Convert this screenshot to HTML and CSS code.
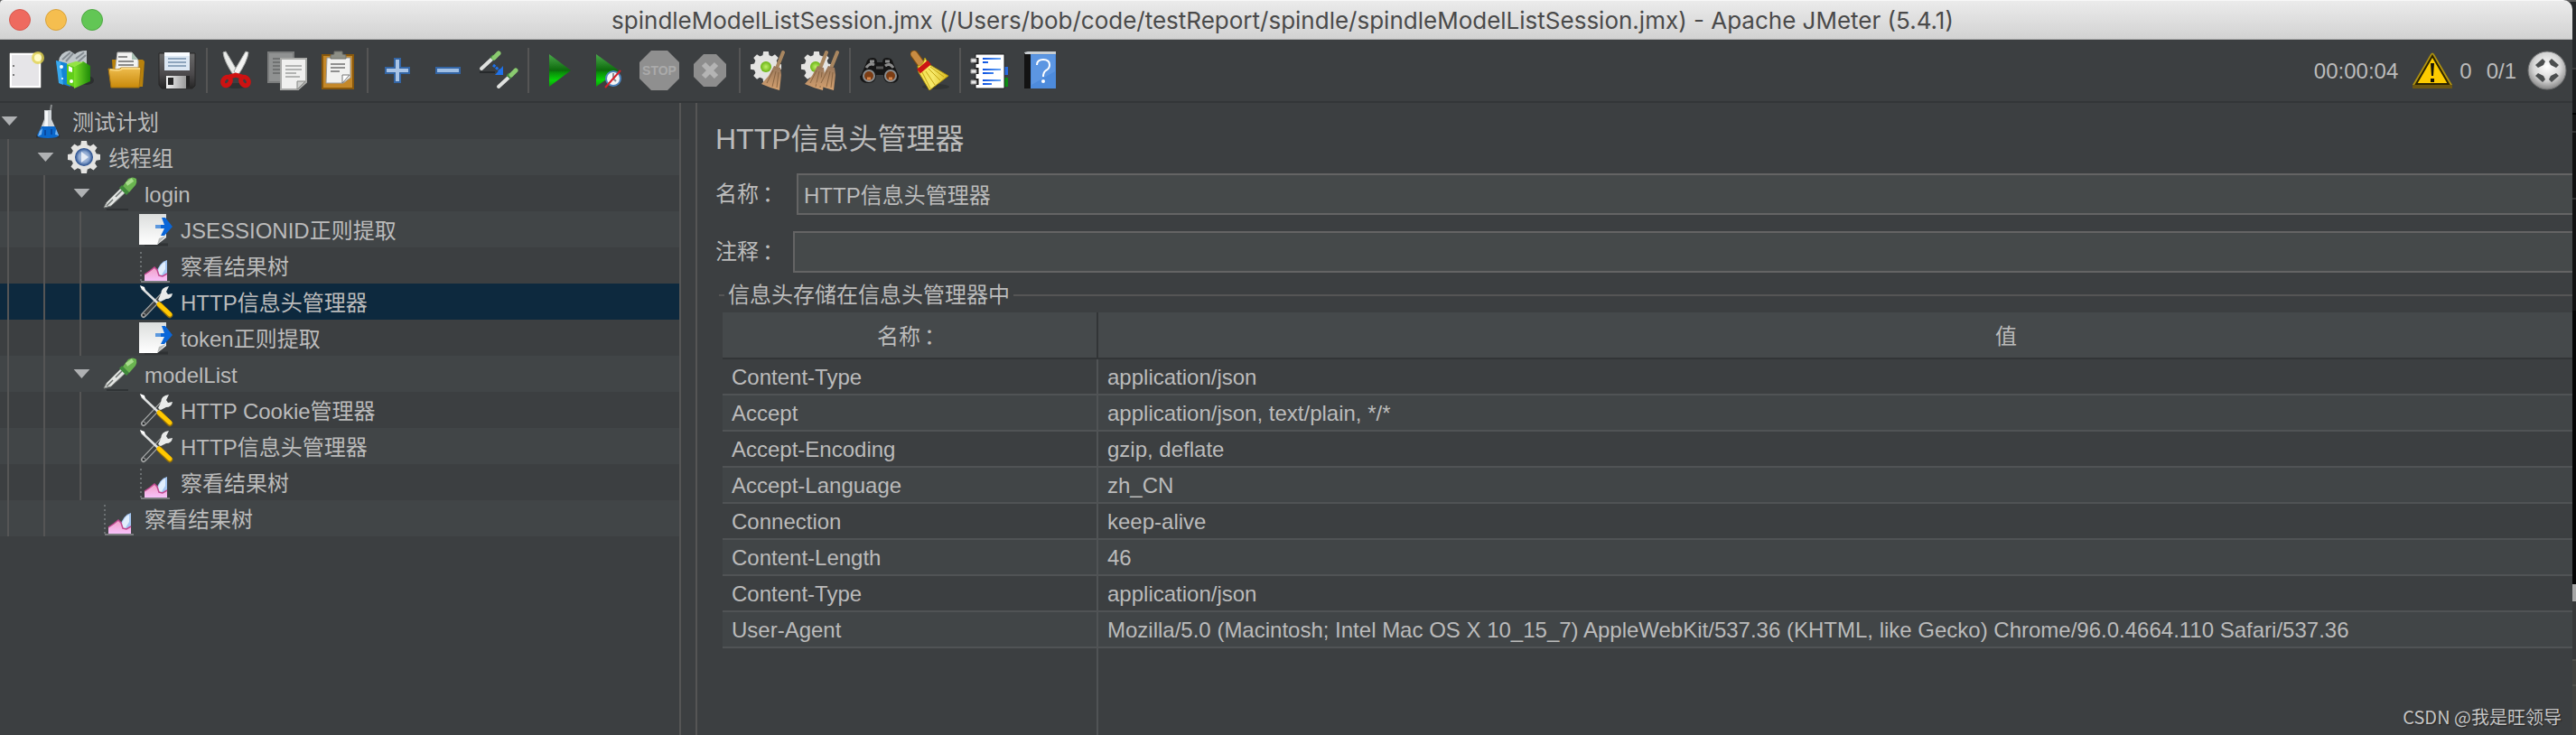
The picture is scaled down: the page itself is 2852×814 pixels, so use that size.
FILE: index.html
```html
<!DOCTYPE html>
<html lang="zh-CN">
<head>
<meta charset="utf-8">
<title>spindleModelListSession.jmx - Apache JMeter (5.4.1)</title>
<link rel="stylesheet" href="styles.css">
</head>
<body>
<svg class="defs" width="0" height="0" aria-hidden="true">
  <defs>
    <linearGradient id="paper" x1="0" y1="0" x2="0" y2="1"><stop offset="0" stop-color="#dcdedd"/><stop offset="1" stop-color="#fff"/></linearGradient>
    <linearGradient id="play" x1="0" y1="0" x2="0" y2="1"><stop offset="0" stop-color="#4aa84a"/><stop offset=".5" stop-color="#0c6a0c"/><stop offset=".55" stop-color="#0a8a0a"/><stop offset=".8" stop-color="#08d208"/><stop offset="1" stop-color="#0a9a0a"/></linearGradient>
    <linearGradient id="gold" x1="0" y1="0" x2="0" y2="1"><stop offset="0" stop-color="#eebc4e"/><stop offset="1" stop-color="#c98a0a"/></linearGradient>
    <linearGradient id="green" x1="0" y1="0" x2="1" y2="0"><stop offset="0" stop-color="#7be02a"/><stop offset="1" stop-color="#1e8a08"/></linearGradient>
    <linearGradient id="floppy" x1="0" y1="0" x2="0" y2="1"><stop offset="0" stop-color="#6a6a6a"/><stop offset=".6" stop-color="#4b494b"/><stop offset="1" stop-color="#252525"/></linearGradient>
    <linearGradient id="metal" x1="0" y1="0" x2="1" y2="0"><stop offset="0" stop-color="#f4f4f4"/><stop offset="1" stop-color="#9a9a9a"/></linearGradient>
    <linearGradient id="straw" x1="0" y1="0" x2="0" y2="1"><stop offset="0" stop-color="#97765a"/><stop offset="1" stop-color="#d6a270"/></linearGradient>
    <linearGradient id="yellow" x1="0" y1="0" x2="1" y2="0"><stop offset="0" stop-color="#f5e04a"/><stop offset=".5" stop-color="#f7e96a"/><stop offset="1" stop-color="#d9b91c"/></linearGradient>
    <linearGradient id="blue" x1="0" y1="0" x2="1" y2="0"><stop offset="0" stop-color="#0a4fe0"/><stop offset="1" stop-color="#6aa8f4"/></linearGradient>
    <radialGradient id="ball" cx=".5" cy=".4" r=".6"><stop offset="0" stop-color="#fff"/><stop offset=".6" stop-color="#d6d6d6"/><stop offset="1" stop-color="#858585"/></radialGradient>
    <radialGradient id="lime"><stop offset="0" stop-color="#c0f06a"/><stop offset="1" stop-color="#6ab414"/></radialGradient>
    <radialGradient id="orb" cx=".5" cy=".5" r=".5"><stop offset="0" stop-color="#c2d0e6"/><stop offset=".6" stop-color="#8ba6cf"/><stop offset="1" stop-color="#1e4688"/></radialGradient>
    <linearGradient id="pink" x1="0" y1="0" x2="0" y2="1"><stop offset="0" stop-color="#f0a0c4"/><stop offset="1" stop-color="#f8c0fa"/></linearGradient>

    <symbol id="i-gear" viewBox="0 0 38 38">
      <g fill="#e4e4e2"><circle cx="19" cy="19" r="14"/><path d="M16 1h6l1 6h-8zM16 37h6l1-6h-8z"/><path d="M1 16v6l6 1v-8zM37 16v6l-6 1v-8z"/><path d="M4.500 8.500l4-4 6 4-6 6zM33.500 8.500l-4-4-6 4 6 6zM4.500 29.500l4 4 6-4-6-6zM33.500 29.500l-4 4-6-4 6-6z"/></g>
    </symbol>
    <symbol id="i-group" viewBox="0 0 38 38"><use href="#i-gear"/><circle cx="19" cy="19" r="10" fill="url(#orb)"/><path d="M16 13l8 6-8 6z" fill="#e6ecf6"/></symbol>
    <symbol id="i-flask" viewBox="0 0 38 38">
      <path d="M6 36h26" stroke="#24282c" stroke-width="3" opacity=".6"/>
      <path d="M15 7h8v10l8 18q-1 2-12 2T8 35l7-18z" fill="#cfd4d8"/><path d="M16 8h3v26h-6l3-15z" fill="#f5f7f8"/>
      <path d="M12 25h15l4 10q-1 3-12 3T7 35z" fill="#0a68cc"/><path d="M10 30l-2 6 4-2 1-7zM28 28l3 7-4-1z" fill="#78b4f0"/><path d="M16 29v6M23 28v6" stroke="#0848a0" stroke-width="2"/><path d="M22 7l1-6" stroke="#8a8d8f" stroke-width="2"/>
    </symbol>
    <symbol id="i-pipette" viewBox="0 0 38 38">
      <path d="M4 37h24" stroke="#26292b" stroke-width="2" opacity=".6"/>
      <path d="M1 35L4 29 20 13l5 5L9 33z" fill="#e2e4e2" stroke="#7b7f7c"/><path d="M4 33L11 26M14 23l7-7" stroke="#6e7472" stroke-width="1.500"/>
      <path d="M21 10l8 8-3 3-8-8z" fill="#3f8a3a"/><path d="M22 11l6-8q5-3 9 0 1 4-1 7l-7 8z" fill="#6ab450"/><path d="M26 9l7-5" stroke="#a8dc8c" stroke-width="4"/>
    </symbol>
    <symbol id="i-extract" viewBox="0 0 38 38">
      <path d="M6 36h26" stroke="#25282a" stroke-width="3" opacity=".6"/>
      <path d="M0 2h30v26L20 36H0z" fill="url(#paper)"/><path d="M20 36l2-7 8-3z" fill="#b8bab9"/>
      <path d="M18 14h12v4H18z" fill="#5c98de"/><path d="M25 6h4l8 10-9 10h-4l4-8h-4v-4h4z" fill="#0a66d8"/>
    </symbol>
    <symbol id="i-tree" viewBox="0 0 38 38">
      <path d="M2 4v33" stroke="#6b7072" stroke-width="2" stroke-dasharray="2 3"/><path d="M2 37h32" stroke="#7a7c7e" stroke-width="2"/>
      <path d="M18 30q4-15 13-17v22H18z" fill="#a4c6f2"/><path d="M20 28q3-11 9-13v8l-5 8z" fill="#e1eefc"/>
      <path d="M6 36v-7l6-4 5-4 3 3 2 6 4 1 5-3v8z" fill="url(#pink)"/><path d="M6 29l6-4 5-4 3 3 2 6 4 1 5-3" fill="none" stroke="#c04890" stroke-width="1.500"/>
    </symbol>
    <symbol id="i-tools" viewBox="0 0 38 38">
      <path d="M5 34L25 13" stroke="#a6a8a8" stroke-width="6" stroke-linecap="round"/><path d="M6 33L24 14" stroke="#3c4042" stroke-width="3.500" stroke-linecap="round"/>
      <path d="M3 4l18 17" stroke="#dfe1e1" stroke-width="2.500"/><path d="M1 1l5 2 1 4-5-3z" fill="#fff"/>
      <path d="M21 17l3-6q0-8 9-9l-3 6 2 3 5-1q-1 6-7 6l-6 3z" fill="#e9ebea"/><circle cx="5" cy="34" r="2" fill="#25282a" stroke="#a8aaaa"/>
      <path d="M23 23l11 11" stroke="#94700a" stroke-width="6.500" stroke-linecap="round"/><path d="M22 22l12 11" stroke="#ffc800" stroke-width="5" stroke-linecap="round"/>
    </symbol>
    <symbol id="i-broom" viewBox="0 0 28 44">
      <path d="M25 2l-6 15" stroke="#a88660" stroke-width="4" stroke-linecap="round"/><path d="M15 17l7 2 1 8-2 17-10-3-10-4 8-9z" fill="url(#straw)"/>
      <path d="M14 22L7 36M17 23l-4 17M20 24l-2 17" stroke="#7c5a3a" stroke-width=".8"/>
    </symbol>
  </defs>
</svg>

<main class="window">
  <header class="titlebar">
    <div class="lights">
      <button class="light close" type="button" aria-label="关闭"></button>
      <button class="light minimize" type="button" aria-label="最小化"></button>
      <button class="light zoom" type="button" aria-label="缩放"></button>
    </div>
    <h1 class="window-title">spindleModelListSession.jmx (/Users/bob/code/testReport/spindle/spindleModelListSession.jmx) - Apache JMeter (5.4.1)</h1>
  </header>

  <div class="toolbar" role="toolbar">
    <button class="tool" type="button" aria-label="新建"><svg viewBox="0 0 44 44"><path d="M5 3h34v38H5z" fill="#e6e5e8" stroke="#a9a9a7" stroke-width="1"/><path d="M6 4h32v36H6z" fill="none" stroke="#fff" stroke-width="2"/><path d="M8 17h2M8 27h2" stroke="#777" stroke-width="2"/><circle cx="36" cy="8" r="7" fill="#e3d54e" opacity=".8"/><circle cx="36" cy="8" r="4" fill="#fffcc8"/></svg></button>
    <button class="tool" type="button" aria-label="模板"><svg viewBox="0 0 44 44"><path d="M3 12q1-10 12-12l6 4q4-4 13-4v26H6z" fill="#bfc6ca"/><path d="M7 10L16 2M11 12l8-9M22 9l9-7M24 13l9-8" stroke="#858c92" stroke-width="2"/><ellipse cx="34" cy="33" rx="8" ry="5" fill="#2b2e2f"/><path d="M0 11l12 3 4 26-12-4z" fill="#1484d6"/><path d="M0 11l5 2 3 25-5-2z" fill="#38a8ee"/><path d="M12 15l9 3v23l-9-4z" fill="#62ce1a"/><path d="M20 18l10-6 8 5v17L20 42z" fill="url(#green)"/><path d="M12 15l10-3 8 1-10 5z" fill="#94e444"/><circle cx="6" cy="18" r="2" fill="#fff"/><circle cx="7" cy="31" r="1" fill="#fff"/><path d="M14 17l4 2v5l-4-1z" fill="#fff"/><circle cx="17" cy="34" r="2" fill="#fff"/></svg></button>
    <button class="tool" type="button" aria-label="打开"><svg viewBox="0 0 44 44"><path d="M6 10h34l2 2-2 28H8z" fill="#b8810c"/><path d="M12 2h16l7 9v15H9z" fill="#f3f3f2" stroke="#b6b6b4"/><path d="M28 2v8h7z" fill="#a8c0b4"/><path d="M13 7h10M13 12h17M13 16h17" stroke="#8b8b8b" stroke-width="2"/><path d="M2 20q12 2 14-1h22l-2 22H5z" fill="url(#gold)" stroke="#a87410"/><path d="M4 21q12 2 13-1h20" stroke="#f8d67e" stroke-width="2" fill="none"/></svg></button>
    <button class="tool" type="button" aria-label="保存"><svg viewBox="0 0 44 44"><path d="M2 3h40v36l-3 3H5l-3-4z" fill="url(#floppy)" stroke="#262626"/><path d="M8 2h28v20H8z" fill="#dde8f4"/><path d="M8 2h28v4H8z" fill="#f8fbff"/><path d="M12 9h20M12 13h20M12 17h20" stroke="#8ea5bd" stroke-width="2"/><path d="M10 28h22v14H10z" fill="url(#metal)"/><path d="M12 30h6v8h-6z" fill="#262626"/><path d="M32 28h4v12h-4z" fill="#222"/></svg></button>
    <span class="separator"></span>
    <button class="tool" type="button" aria-label="剪切"><svg viewBox="0 0 44 44"><ellipse cx="22" cy="39" rx="14" ry="3" fill="#2e3132"/><path d="M7 2l3-1 13 22-4 5Q8 12 7 2z" fill="#e9ebe9" stroke="#a6a9a7"/><path d="M35 2l-3-1-13 22 4 5Q34 12 35 2z" fill="#f3f3f2" stroke="#a6a9a7"/><g fill="none" stroke="#ce1212" stroke-width="5"><ellipse cx="11" cy="34" rx="4" ry="5" transform="rotate(35 11 34)"/><ellipse cx="31" cy="34" rx="4" ry="5" transform="rotate(-35 31 34)"/><path d="M14 29l7-2 7 2"/></g></svg></button>
    <button class="tool" type="button" aria-label="复制"><svg viewBox="0 0 44 44"><path d="M1 2h28v33H1z" fill="#909292" stroke="#7b7d7d" stroke-width="2"/><path d="M6 9h16M6 13h10M6 17h10M6 21h8M6 25h8" stroke="#707272" stroke-width="2"/><path d="M15 9h28v26l-9 8H15z" fill="#f0f0ef" stroke="#a9aaa8" stroke-width="2"/><path d="M33 43v-9h9z" fill="#cfd0ce" stroke="#858683"/><path d="M20 17h18M20 21h18M20 25h12M20 29h16" stroke="#b3b4b3" stroke-width="2"/></svg></button>
    <button class="tool" type="button" aria-label="粘贴"><svg viewBox="0 0 44 44"><path d="M5 5h34v37H5z" fill="#c4882a" stroke="#89580c" stroke-width="2"/><path d="M10 8h26v22l-8 6H9z" fill="#f1f1f0" stroke="#999"/><path d="M27 36v-9h8z" fill="#fff" stroke="#777"/><path d="M14 15h16M14 19h16M14 23h10" stroke="#909090" stroke-width="2"/><path d="M14 9V5l4-1V1h9v3l4 1v4z" fill="#8d8f86" stroke="#6d6f68"/></svg></button>
    <span class="separator"></span>
    <button class="tool" type="button" aria-label="展开"><svg viewBox="0 0 44 44"><path d="M19 9h6v10h10v6H25v10h-6V25H9v-6h10z" fill="#a9c4e6" stroke="#3465a4" stroke-width="2"/></svg></button>
    <button class="tool" type="button" aria-label="收起"><svg viewBox="0 0 44 44"><path d="M9 19h26v6H9z" fill="#a0bfe4" stroke="#3465a4" stroke-width="2"/></svg></button>
    <button class="tool" type="button" aria-label="切换"><svg viewBox="0 0 44 44"><path d="M1 24h17" stroke="#26292b" stroke-width="2"/><path d="M3 20L16 8" stroke="#dfe1df" stroke-width="4" stroke-linecap="round"/><path d="M14 6l4 4" stroke="#3f8a3a" stroke-width="4"/><path d="M17 8l5-5" stroke="#8bcb70" stroke-width="5" stroke-linecap="round"/><path d="M22 40l12-11" stroke="#dfe1df" stroke-width="4" stroke-linecap="round"/><path d="M32 26l4 4" stroke="#3f8a3a" stroke-width="4"/><path d="M36 27l5-5" stroke="#8bcb70" stroke-width="5" stroke-linecap="round"/><path d="M16 16l8 7" stroke="#1f72ea" stroke-width="3" stroke-dasharray="3 1"/><path d="M27 17v10H18z" fill="#1f72ea"/></svg></button>
    <span class="separator"></span>
    <button class="tool" type="button" aria-label="启动"><svg viewBox="0 0 44 44"><path d="M12 4l24 18-24 18z" fill="url(#play)"/></svg></button>
    <button class="tool" type="button" aria-label="不停顿启动"><svg viewBox="0 0 44 44"><path d="M8 4l25 18L8 40z" fill="url(#play)"/><circle cx="27" cy="31" r="8" fill="#f4f6f8" stroke="#4d84bd" stroke-width="2"/><path d="M27 25v6l3 3" fill="none" stroke="#8a9098" stroke-width="2"/><path d="M18 41l17-19" stroke="#d6202a" stroke-width="2"/></svg></button>
    <button class="tool" type="button" aria-label="停止" disabled><svg viewBox="0 0 44 44"><path d="M13 0h18l13 13v18L31 44H13L0 31V13z" fill="#8f8f8f"/><text x="22" y="27" class="stop-text">STOP</text></svg></button>
    <button class="tool" type="button" aria-label="关闭线程" disabled><svg viewBox="0 0 44 44"><path d="M15 4h14l11 11v14L29 40H15L4 29V15z" fill="#8d8d8d"/><path d="M15 15l14 14M29 15L15 29" stroke="#b4b4b4" stroke-width="6"/></svg></button>
    <span class="separator"></span>
    <button class="tool" type="button" aria-label="清除"><svg viewBox="0 0 44 44"><use href="#i-gear" x="0" y="0" width="36" height="36"/><circle cx="18" cy="18" r="6" fill="url(#lime)"/><use href="#i-broom" x="12" y="0" width="28" height="44"/></svg></button>
    <button class="tool" type="button" aria-label="清除全部"><svg viewBox="0 0 44 44"><use href="#i-gear" x="0" y="0" width="36" height="36"/><circle cx="17" cy="18" r="6" fill="url(#lime)"/><use href="#i-broom" x="4" y="0" width="28" height="44"/><use href="#i-broom" x="16" y="0" width="28" height="44"/></svg></button>
    <span class="separator"></span>
    <button class="tool" type="button" aria-label="查找"><svg viewBox="0 0 44 44"><path d="M1 28L7 14q1-6 7-6 5 0 5 5h6q0-5 5-5 6 0 7 6l6 14q0 8-8 8-9 0-9-9h-8q0 9-9 9-9 0-9-8z" fill="#161616"/><path d="M7 19q4-6 9-3M28 17q5-4 9 2M11 12h5M28 12h5" stroke="#8d8d8d" stroke-width="3" fill="none"/><path d="M18 19h8" stroke="#555" stroke-width="3"/><circle cx="10" cy="28" r="7" fill="#8b8d8e"/><circle cx="10" cy="28" r="5" fill="#7c3d14"/><circle cx="34" cy="28" r="7" fill="#8b8d8e"/><circle cx="34" cy="28" r="5" fill="#7c3d14"/><path d="M8 31h4M32 31h4" stroke="#d8864a" stroke-width="3"/></svg></button>
    <button class="tool" type="button" aria-label="重置查找"><svg viewBox="0 0 44 44"><ellipse cx="28" cy="40" rx="15" ry="3" fill="#303334"/><path d="M4 4l8 11" stroke="#7b4d12" stroke-width="9" stroke-linecap="round"/><path d="M4 4l8 11" stroke="#c98c42" stroke-width="7" stroke-linecap="round"/><path d="M8 17q6 0 8-9l4 7 22 13-21 16L9 24z" fill="url(#yellow)" stroke="#b0940c"/><path d="M13 24l9 18M17 23l10 15M20 20l13 13M22 18l15 11" stroke="#c2a414" stroke-width="1"/><path d="M9 23l12-10" stroke="#cc1414" stroke-width="6"/></svg></button>
    <span class="separator"></span>
    <button class="tool" type="button" aria-label="函数助手"><svg viewBox="0 0 44 44"><path d="M37 18h5v9h-5z" fill="#2a6ce0"/><path d="M37 30h5v10h-5z" fill="#0c8c12"/><path d="M6 4h32v38H6z" fill="#fff" stroke="#1f2122"/><path d="M7 8v7M7 19v7M7 31v7" stroke="#1f1f1f" stroke-width="5"/><path d="M1 9h6v4H1zM1 21h6v4H1zM1 33h6v4H1z" fill="#e8e8e8" stroke="#999"/><path d="M14 8h20v2H14zM14 12h6v2h-6zM14 20h20v2H14zM14 24h12v2H14zM14 32h20v2H14zM14 36h10v2H14z" fill="url(#blue)"/></svg></button>
    <button class="tool" type="button" aria-label="帮助"><svg viewBox="0 0 44 44"><path d="M4 3h7v39H4z" fill="#131313"/><path d="M4 2l4-1h31v3H5z" fill="#c9ced2"/><path d="M11 4h28v38H11z" fill="#4d8bdc"/><path d="M12 5h26v18L12 38z" fill="#689fe6" opacity=".6"/><path d="M18 16q0-6 7-6t7 6q0 4-4 6-3 2-3 7" fill="none" stroke="#fff" stroke-width="2"/><circle cx="25" cy="34" r="2" fill="#fff"/></svg></button>

    <div class="status">
      <span>00:00:04</span>
      <button class="warning" type="button" aria-label="日志错误"><svg viewBox="0 0 44 44"><path d="M20 4q2-3 4 0l20 34v4H0v-4z" fill="#b0920f"/><path d="M0 38h44v4H0z" fill="#6b5612"/><path d="M22 6l18 31H4z" fill="#fccb00" stroke="#2c2400" stroke-width="2"/><path d="M20 14h4l-1 14h-2zM20 31h4v4h-4z" fill="#14130a"/></svg></button>
      <span class="errors">0</span>
      <span class="threads">0/1</span>
      <svg class="state" viewBox="0 0 44 44"><circle cx="22" cy="22" r="21" fill="url(#ball)" stroke="#6f7172"/><g fill="#4b4e4f"><path d="M9 16l8-7 3 3-2 4-6 3zM35 16l-8-7-3 3 2 4 6 3zM9 28l8 7 3-3-2-4-6-3zM35 28l-8 7-3-3 2-4 6-3z"/></g></svg>
    </div>
  </div>

  <div class="workspace">
    <ul class="tree" role="tree">
      <li class="node" role="treeitem"><button class="toggle" type="button" aria-label="折叠"></button><svg class="icon"><use href="#i-flask"/></svg><span>测试计划</span></li>
      <li class="node" role="treeitem"><i class="guide"></i><button class="toggle" type="button" aria-label="折叠"></button><svg class="icon"><use href="#i-group"/></svg><span>线程组</span></li>
      <li class="node" role="treeitem"><i class="guide"></i><i class="guide"></i><button class="toggle" type="button" aria-label="折叠"></button><svg class="icon"><use href="#i-pipette"/></svg><span>login</span></li>
      <li class="node" role="treeitem"><i class="guide"></i><i class="guide"></i><i class="guide"></i><i class="leaf"></i><svg class="icon"><use href="#i-extract"/></svg><span>JSESSIONID正则提取</span></li>
      <li class="node" role="treeitem"><i class="guide"></i><i class="guide"></i><i class="guide"></i><i class="leaf"></i><svg class="icon"><use href="#i-tree"/></svg><span>察看结果树</span></li>
      <li class="node selected" role="treeitem" aria-selected="true"><i class="guide"></i><i class="guide"></i><i class="guide"></i><i class="leaf"></i><svg class="icon"><use href="#i-tools"/></svg><span>HTTP信息头管理器</span></li>
      <li class="node" role="treeitem"><i class="guide"></i><i class="guide"></i><i class="guide"></i><i class="leaf"></i><svg class="icon"><use href="#i-extract"/></svg><span>token正则提取</span></li>
      <li class="node" role="treeitem"><i class="guide"></i><i class="guide"></i><button class="toggle" type="button" aria-label="折叠"></button><svg class="icon"><use href="#i-pipette"/></svg><span>modelList</span></li>
      <li class="node" role="treeitem"><i class="guide"></i><i class="guide"></i><i class="guide"></i><i class="leaf"></i><svg class="icon"><use href="#i-tools"/></svg><span>HTTP Cookie管理器</span></li>
      <li class="node" role="treeitem"><i class="guide"></i><i class="guide"></i><i class="guide"></i><i class="leaf"></i><svg class="icon"><use href="#i-tools"/></svg><span>HTTP信息头管理器</span></li>
      <li class="node" role="treeitem"><i class="guide"></i><i class="guide"></i><i class="guide"></i><i class="leaf"></i><svg class="icon"><use href="#i-tree"/></svg><span>察看结果树</span></li>
      <li class="node" role="treeitem"><i class="guide"></i><i class="guide"></i><i class="leaf"></i><svg class="icon"><use href="#i-tree"/></svg><span>察看结果树</span></li>
    </ul>
    <div class="divider"></div>

    <section class="panel">
      <h2 class="panel-title">HTTP信息头管理器</h2>
      <div class="field name-field"><label for="name">名称<span class="colon">：</span></label><input id="name" type="text" value="HTTP信息头管理器"></div>
      <div class="field"><label for="comment">注释<span class="colon">：</span></label><input id="comment" type="text"></div>
      <fieldset class="headers">
        <legend>信息头存储在信息头管理器中</legend>
        <table>
          <thead><tr><th class="key">名称<span class="colon">：</span></th><th>值</th></tr></thead>
          <tbody>
            <tr><td>Content-Type</td><td>application/json</td></tr>
            <tr><td>Accept</td><td>application/json, text/plain, */*</td></tr>
            <tr><td>Accept-Encoding</td><td>gzip, deflate</td></tr>
            <tr><td>Accept-Language</td><td>zh_CN</td></tr>
            <tr><td>Connection</td><td>keep-alive</td></tr>
            <tr><td>Content-Length</td><td>46</td></tr>
            <tr><td>Content-Type</td><td>application/json</td></tr>
            <tr><td>User-Agent</td><td>Mozilla/5.0 (Macintosh; Intel Mac OS X 10_15_7) AppleWebKit/537.36 (KHTML, like Gecko) Chrome/96.0.4664.110 Safari/537.36</td></tr>
          </tbody>
        </table>
        <div class="table-rest"></div>
      </fieldset>
    </section>
  </div>
</main>
<p class="watermark">CSDN @我是旺领导</p>
</body>
</html>
```
FILE: styles.css
```css
* { box-sizing: border-box; }

body {
  margin: 0;
  height: 100vh;
  padding-right: 4px;
  overflow: hidden;
  position: relative;
  background: linear-gradient(#5a5a5a 0 2px, #26282a 2px 75px, #3c3c3c 75px 77px, #1a1b1c 77px 125px, #000 125px 127px, #151515 127px 145px, #333 145px 147px, #111 147px 219px, #333 219px 221px, #121212 221px 344px, #050505 344px 647px, #a5a5a5 647px 666px, #38393a 666px 730px, #50504c 730px 732px, #42423f 732px 758px, #50504c 758px 760px, #42423f 760px);
  color: #bbb;
  font: 24px/30px "Liberation Sans", "Noto Sans CJK SC", sans-serif;
}

button { margin: 0; padding: 0; border: 0; background: none; }
svg { display: block; }
.defs { position: absolute; }

.window {
  display: flex;
  flex-direction: column;
  height: 100%;
  overflow: hidden;
  border-radius: 4px 10px 0 0;
  background: #3c3f41;
}

.titlebar {
  display: grid;
  grid-template-columns: 1fr auto 1fr;
  align-items: center;
  height: 44px;
  padding-right: 8px;
  flex: none;
  border-top: 1px solid #f8f8f8;
  border-bottom: 1px solid #b0b0b0;
  background: linear-gradient(#ebebeb, #d2d2d2);
}

.lights { display: flex; gap: 16px; padding-left: 10px; }
.light { width: 24px; height: 24px; border-radius: 50%; border: 1px solid; }
.close { background: #ee6a5f; border-color: #d65a50; }
.minimize { background: #f5be4f; border-color: #d8a23c; }
.zoom { background: #62c655; border-color: #50a845; }

.window-title {
  margin: 0;
  padding-top: 2px;
  color: #4a4a4a;
  font: 400 26px/32px Inter, sans-serif;
  white-space: nowrap;
}

.toolbar {
  display: flex;
  align-items: center;
  height: 70px;
  flex: none;
  border-bottom: 2px solid #333638;
}

.tool { display: flex; justify-content: center; width: 56px; flex: none; }
.tool svg, .warning svg, .state { width: 44px; height: 44px; }
.separator { width: 2px; height: 50px; margin: 0 4px; background: #555; }
.stop-text { font: bold 14px "Liberation Sans", sans-serif; fill: #aaa; text-anchor: middle; }

.status { display: flex; align-items: center; margin-left: auto; padding-right: 6px; }
.status span { padding-top: 2px; }
.warning { margin: 0 8px 0 16px; }
.threads { margin: 0 12px 0 16px; }

.workspace { display: flex; flex: 1; min-height: 0; }

.tree { width: 752px; flex: none; margin: 0; padding: 0; list-style: none; }
.node { display: flex; align-items: center; height: 40px; }
.node:nth-child(even) { background: #414547; }
.node.selected { background: #0d293e; }
.node span { padding-top: 3px; }
.guide { width: 40px; height: 40px; border-left: 2px solid #555; margin-left: 8px; margin-right: -8px; flex: none; }
.toggle, .leaf { width: 20px; flex: none; margin-right: 14px; }
.toggle { height: 10px; background: #afb1b3; clip-path: polygon(8% 0, 97% 0, 52% 100%); }
.icon { width: 38px; height: 38px; margin-right: 8px; flex: none; }

.divider { width: 20px; flex: none; border: solid #555; border-width: 0 2px; }

.panel {
  display: flex;
  flex-direction: column;
  flex: 1;
  min-width: 0;
  margin-right: -378px;
  padding: 20px 0 0 20px;
}

.panel-title { margin: 0 0 18px; font-size: 32px; line-height: 40px; font-weight: 400; }
.field { display: flex; align-items: center; margin-bottom: 18px; }
.field label { width: 86px; flex: none; }
.name-field label { width: 90px; }
.colon { margin: 0 -4px 0 4px; }

input {
  flex: 1;
  min-width: 0;
  height: 46px;
  padding: 0 6px 2px;
  border: 2px solid #646464;
  border-radius: 0;
  background: #45494a;
  color: inherit;
  font: inherit;
}

.headers {
  display: flex;
  flex-direction: column;
  flex: 1;
  min-width: 0;
  min-height: 0;
  margin: -8px 0 0 4px;
  padding: 4px 0 0 4px;
  border: 0 solid #555;
  border-top-width: 2px;
}

legend { margin-left: 2px; padding: 0 4px; }

table { width: 100%; border-collapse: separate; border-spacing: 0; table-layout: fixed; }
th { height: 52px; padding: 3px 0 0; font-weight: 400; background: #45494b; border-bottom: 2px solid #323537; }
.key { width: 416px; border-right: 2px solid #323537; }
td { height: 40px; padding: 2px 10px 0; border-bottom: 2px solid #505355; }
td:first-child { border-right: 2px solid #505355; }
tbody tr:nth-child(even) { background: #414547; }
.table-rest { flex: 1; width: 416px; border-right: 2px solid #505355; }

.watermark {
  position: absolute;
  right: 16px;
  bottom: 8px;
  margin: 0;
  color: #c4c4c4;
  font: 20px/24px "Noto Sans CJK SC", sans-serif;
  text-shadow: 1px 1px 1px #222;
}
```
